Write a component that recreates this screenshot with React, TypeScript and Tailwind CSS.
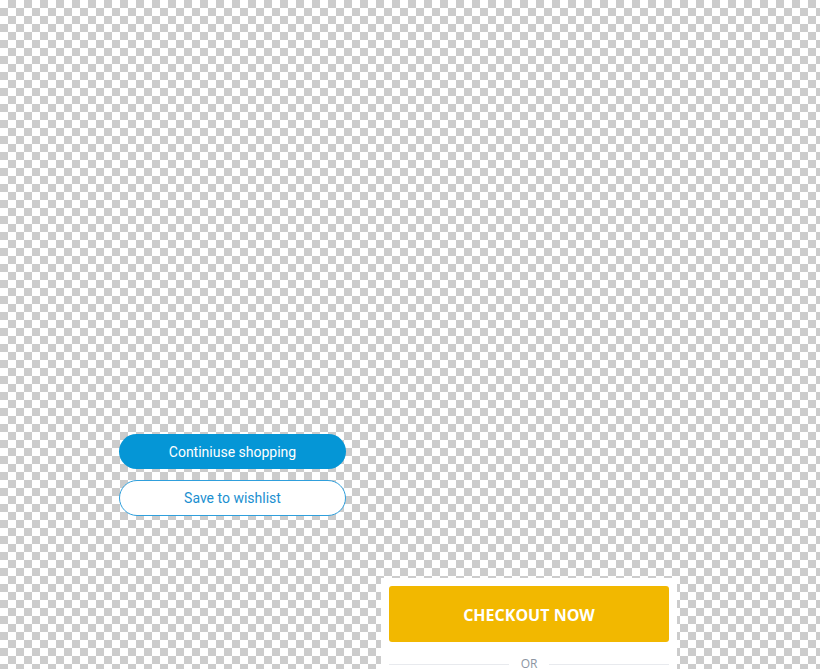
import React from 'react';

export default function App() {
  return (
    <div className="w-full h-[669px] overflow-hidden bg-[conic-gradient(#cccccc_25%,#ffffff_0_50%,#cccccc_0_75%,#ffffff_0)] [background-size:16px_16px] pt-[434px]">
      {/* cart actions */}
      <div className="ml-[119px] w-[227px] flex flex-col gap-[11px] font-['Roboto',sans-serif]">
        <button className="h-[35px] w-full rounded-full bg-[#0596d6] text-white text-[14px] leading-[36px]">
          Continiuse shopping
        </button>
        <button className="h-[36px] w-full rounded-full bg-white border border-[#2f9fdc] text-[#1b8fd0] text-[14px]">
          Save to wishlist
        </button>
      </div>

      {/* checkout box */}
      <div className="mt-[62px] ml-[381px] w-[296px] bg-white px-2 pt-2 pb-4 font-['Open_Sans',sans-serif]">
        <button className="h-[56px] w-full rounded-[3px] bg-[#f2b800] text-white text-[16px] font-bold leading-[58px]">
          CHECKOUT NOW
        </button>
        <div className="mt-[14px] flex items-center gap-3">
          <div className="flex-1 h-px bg-[#e8eaee]" />
          <span className="text-[12px] leading-4 text-[#8c95a2]">OR</span>
          <div className="flex-1 h-px bg-[#e8eaee]" />
        </div>
      </div>
    </div>
  );
}
